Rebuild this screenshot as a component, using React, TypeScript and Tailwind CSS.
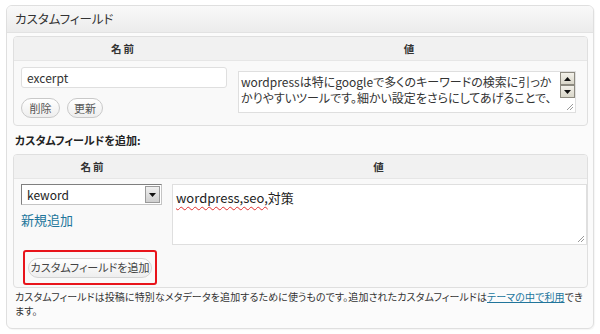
import React from 'react'

const jp = "font-['Noto_Sans_CJK_JP',sans-serif] [font-feature-settings:'palt']"

function ScrollArrow({ dir }: { dir: 'up' | 'down' }) {
  return (
    <div className="w-[15px] h-[13px] bg-gradient-to-b from-[#f3f1ea] to-[#d9d6c9] border border-[#8d8a80] flex items-center justify-center">
      <svg width="7" height="4" viewBox="0 0 7 4">
        {dir === 'up' ? <path d="M0 4 L3.5 0 L7 4 Z" fill="#111" /> : <path d="M0 0 L7 0 L3.5 4 Z" fill="#111" />}
      </svg>
    </div>
  )
}

function Grip() {
  return (
    <svg width="8" height="8" viewBox="0 0 8 8" className="absolute right-[1px] bottom-[1px]">
      <path d="M7 1 L1 7 M7 4 L4 7" stroke="#9a9a9a" strokeWidth="1" />
    </svg>
  )
}

function PillButton({ label, w }: { label: string; w: string }) {
  return (
    <button className={`${w} h-[20px] rounded-full border border-[#c9c9c9] bg-gradient-to-b from-white to-[#eeeeee] text-[11px] text-[#555] flex items-center justify-center`}>
      {label}
    </button>
  )
}

export default function App() {
  return (
    <div className={`w-[600px] h-[334px] bg-white pt-[5px] pl-[6px] ${jp}`}>
      <div className="w-[588px] h-[324px] border border-[#dfdfdf] rounded-[6px] bg-[#fbfbfb] overflow-hidden shadow-[1px_1px_1px_rgba(0,0,0,0.04)]">
        {/* Title */}
        <div className="h-[27px] bg-gradient-to-b from-[#f9f9f9] to-[#ececec] border-b border-[#e2e2e2] flex items-center pl-[8px] text-[12.5px] text-[#333]">
          カスタムフィールド
        </div>

        <div className="px-[6px] pt-[3px]">
          {/* Existing fields */}
          <div className="w-[575px] border border-[#dfdfdf] rounded-[4px] bg-[#f9f9f9] overflow-hidden">
            <div className="flex h-[24px] bg-[#f1f1f1] border-b border-[#e6e6e6] text-[10.5px] font-bold text-[#333] tracking-[2px]">
              <div className="w-[219px] flex items-center justify-center">名前</div>
              <div className="flex-1 flex items-center justify-center">値</div>
            </div>
            <div className="flex h-[64px]">
              <div className="w-[219px] pl-[7px] pt-[6px]">
                <div className="w-[206px] h-[21px] border border-[#dfdfdf] bg-white rounded-[3px] flex items-center pl-[5px] text-[12px] text-[#333]">
                  excerpt
                </div>
                <div className="flex gap-[7px] mt-[10px]">
                  <PillButton label="削除" w="w-[39px]" />
                  <PillButton label="更新" w="w-[36px]" />
                </div>
              </div>
              <div className="pl-[5px] pt-[10px]">
                <div className="relative w-[338px] h-[42px] border border-[#dfdfdf] bg-white flex">
                  <div className="flex-1 overflow-hidden whitespace-nowrap text-[12px] leading-[16px] text-[#333] pl-[2px] pt-[2px]">
                    wordpressは特にgoogleで多くのキーワードの検索に引っか<br />
                    かりやすいツールです。細かい設定をさらにしてあげることで、
                  </div>
                  <div className="w-[15px] flex flex-col">
                    <ScrollArrow dir="up" />
                    <ScrollArrow dir="down" />
                  </div>
                  <Grip />
                </div>
              </div>
            </div>
          </div>

          {/* Add heading */}
          <div className="h-[28px] flex items-center pl-[2px] text-[11px] font-bold text-[#222]">
            カスタムフィールドを追加:
          </div>

          {/* Add new field */}
          <div className="w-[575px] border border-[#dfdfdf] rounded-[4px] bg-[#f9f9f9] overflow-hidden">
            <div className="flex h-[24px] bg-[#f1f1f1] border-b border-[#e6e6e6] text-[10.5px] font-bold text-[#333] tracking-[2px]">
              <div className="w-[158px] flex items-center justify-center">名前</div>
              <div className="flex-1 flex items-center justify-center">値</div>
            </div>
            <div className="flex h-[108px]">
              <div className="w-[158px] pl-[7px] pt-[5px]">
                <div className="w-[141px] h-[21px] border border-[#7f7f7f] border-r-[#c4c4c4] border-b-[#c4c4c4] bg-white flex items-center">
                  <span className="flex-1 pl-[5px] text-[12px] text-[#222]">keword</span>
                  <div className="w-[15px] h-[17px] mr-[1px] bg-gradient-to-b from-[#f0f0f0] to-[#cfcfcf] border border-[#9a9a9a] flex items-center justify-center">
                    <svg width="7" height="4" viewBox="0 0 7 4">
                      <path d="M0 0 L7 0 L3.5 4 Z" fill="#111" />
                    </svg>
                  </div>
                </div>
                <a className="block mt-[5px] text-[13px] text-[#21759b]">新規追加</a>
              </div>
              <div className="pt-[5px]">
                <div className="relative w-[415px] h-[61px] border border-[#dfdfdf] bg-white text-[13px] text-[#222] pl-[3px] pt-[3px]">
                  <span className="underline decoration-wavy decoration-[#e03030] decoration-1 underline-offset-[3px]">wordpress,seo,</span>対策
                  <Grip />
                </div>
              </div>
            </div>
          </div>
          <div className="-mt-[38px] ml-[10px] w-[134px] h-[35px] border-2 border-[#e8141b] rounded-[3px] flex items-center justify-center relative">
            <button className="w-[124px] h-[20px] rounded-full border border-[#d4d4d4] bg-gradient-to-b from-white to-[#eeeeee] text-[11px] text-[#444]">
              カスタムフィールドを追加
            </button>
          </div>

          {/* Footer text */}
          <p className="mt-[5px] pl-[2px] text-[10px] leading-[14px] tracking-[0.1px] text-[#333] whitespace-nowrap">
            カスタムフィールドは投稿に特別なメタデータを追加するために使うものです。追加されたカスタムフィールドは<a className="text-[#21759b] underline">テーマの中で利用</a>でき<br />
            ます。
          </p>
        </div>
      </div>
    </div>
  )
}
